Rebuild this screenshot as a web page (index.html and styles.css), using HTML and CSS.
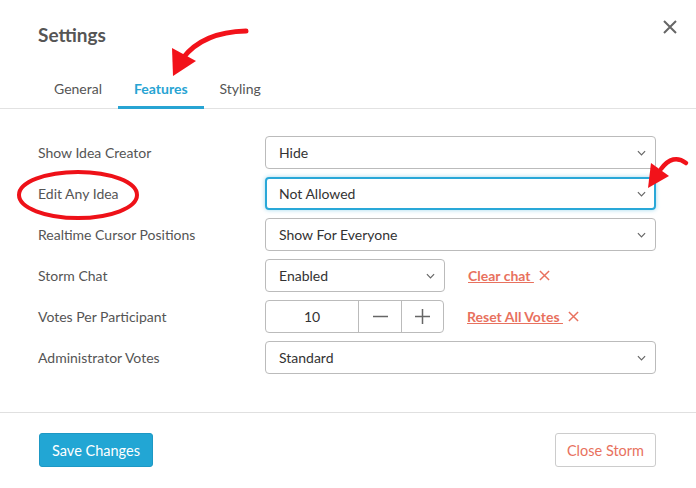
FILE: index.html
```html
<!DOCTYPE html>
<html>
<head>
<meta charset="utf-8">
<link rel="stylesheet" href="styles.css">
</head>
<body>
<div class="modal">
  <header class="modal-header">
    <div class="title-row">
      <h1 class="title">Settings</h1>
      <svg class="close" width="14" height="14" viewBox="0 0 14 14"><path d="M1 1L13 13M13 1L1 13" stroke="#666" stroke-width="2" fill="none"/></svg>
    </div>
    <nav class="tabs">
      <span class="tab">General</span>
      <span class="tab active">Features</span>
      <span class="tab">Styling</span>
    </nav>
  </header>

  <section class="modal-body">
    <div class="row">
      <label class="label">Show Idea Creator</label>
      <div class="select"><span>Hide</span><svg class="chev" viewBox="0 0 10 6"><path d="M1 1L5 5L9 1" stroke="#666" stroke-width="1.3" fill="none"/></svg></div>
    </div>
    <div class="row">
      <label class="label">Edit Any Idea</label>
      <div class="select focus"><span>Not Allowed</span><svg class="chev" viewBox="0 0 10 6"><path d="M1 1L5 5L9 1" stroke="#666" stroke-width="1.3" fill="none"/></svg></div>
    </div>
    <div class="row">
      <label class="label">Realtime Cursor Positions</label>
      <div class="select"><span>Show For Everyone</span><svg class="chev" viewBox="0 0 10 6"><path d="M1 1L5 5L9 1" stroke="#666" stroke-width="1.3" fill="none"/></svg></div>
    </div>
    <div class="row">
      <label class="label">Storm Chat</label>
      <div class="inline">
        <div class="select small"><span>Enabled</span><svg class="chev" viewBox="0 0 10 6"><path d="M1 1L5 5L9 1" stroke="#666" stroke-width="1.3" fill="none"/></svg></div>
        <a class="danger-link"><span class="u">Clear chat </span><svg class="x" viewBox="0 0 12 12"><path d="M1 1L11 11M11 1L1 11" stroke="#e8715e" stroke-width="1.6" fill="none"/></svg></a>
      </div>
    </div>
    <div class="row">
      <label class="label">Votes Per Participant</label>
      <div class="inline">
        <div class="stepper">
          <span class="num">10</span>
          <span class="step"><svg width="15" height="15" viewBox="0 0 15 15"><path d="M0 7.5H15" stroke="#666" stroke-width="1.5"/></svg></span>
          <span class="step"><svg width="15" height="15" viewBox="0 0 15 15"><path d="M0 7.5H15M7.5 0V15" stroke="#666" stroke-width="1.5"/></svg></span>
        </div>
        <a class="danger-link"><span class="u">Reset All Votes </span><svg class="x" viewBox="0 0 12 12"><path d="M1 1L11 11M11 1L1 11" stroke="#e8715e" stroke-width="1.6" fill="none"/></svg></a>
      </div>
    </div>
    <div class="row">
      <label class="label">Administrator Votes</label>
      <div class="select"><span>Standard</span><svg class="chev" viewBox="0 0 10 6"><path d="M1 1L5 5L9 1" stroke="#666" stroke-width="1.3" fill="none"/></svg></div>
    </div>
  </section>

  <footer class="modal-footer">
    <button class="btn primary">Save Changes</button>
    <button class="btn outline">Close Storm</button>
  </footer>

  <svg class="annotations" width="696" height="488" viewBox="0 0 696 488">
    <path d="M246 31 Q203 32 183 58" stroke="#f2121a" stroke-width="5" fill="none" stroke-linecap="round"/>
    <polygon points="172,48 196,61 173,76" fill="#f2121a"/>
    <ellipse cx="78" cy="195" rx="59" ry="23" stroke="#ee1118" stroke-width="4" fill="none"/>
    <path d="M686 163 Q673 153 661 169" stroke="#f2121a" stroke-width="4.5" fill="none" stroke-linecap="round"/>
    <polygon points="651,163 669,176 648,188" fill="#f2121a"/>
  </svg>
</div>
</body>
</html>
```
FILE: styles.css
```css
* { box-sizing: border-box; }
html, body { margin: 0; padding: 0; background: #fff; }
body { font-family: Lato, "Open Sans", sans-serif; color: #555; }

.modal { position: relative; width: 696px; height: 488px; background: #fff; }

.modal-header { border-bottom: 1px solid #e2e2e2; }
.title-row {
  display: flex; justify-content: space-between; align-items: flex-start;
  padding: 23px 19px 0 38px; height: 75px;
}
.title { margin: 0; font-size: 19px; line-height: 24px; font-weight: 700; color: #555; }
.close { margin-top: -3px; }

.tabs { display: flex; padding-left: 38px; margin-bottom: -1px; }
.tab {
  padding: 4px 16px 7px; line-height: 20px; font-size: 14px; color: #555;
  border-bottom: 3px solid transparent;
}
.tab.active { color: #27a4d3; font-weight: 700; border-bottom-color: #27a4d3; }

.modal-body {
  padding: 27px 40px 38px 38px;
  display: flex; flex-direction: column; gap: 8px;
  border-bottom: 1px solid #e0e0e0;
}
.row { display: grid; grid-template-columns: 227px 1fr; align-items: center; height: 33px; }
.label { font-size: 14px; color: #555; }

.select {
  height: 33px; border: 1px solid #bbb; border-radius: 4px;
  display: flex; align-items: center; justify-content: space-between;
  padding: 0 9px 0 13px; font-size: 14px; color: #333;
}
.select.focus { border: 2px solid #29a8d8; padding-left: 12px; padding-right: 8px; box-shadow: 0 0 4px rgba(41,168,216,0.45); }
.select.small { width: 180px; }
.chev { width: 9px; height: 6px; }

.inline { display: flex; align-items: center; gap: 23px; }
.danger-link { display: flex; align-items: center; gap: 1px; font-size: 14px; font-weight: 700; color: #e8715e; }
.danger-link .u { text-decoration: underline; white-space: pre; }
.x { width: 11px; height: 11px; margin-left: 4px; }

.stepper {
  display: flex; width: 179px; height: 33px; border: 1px solid #bbb; border-radius: 4px;
}
.num { width: 93px; display: flex; align-items: center; justify-content: center; font-size: 14px; color: #333; border-right: 1px solid #bbb; }
.step { width: 42px; display: flex; align-items: center; justify-content: center; }
.step + .step { border-left: 1px solid #bbb; flex: 1; }

.modal-footer { display: flex; justify-content: space-between; padding: 20px 40px 0 39px; }
.btn { height: 34px; border-radius: 3px; font-family: Lato, sans-serif; font-size: 14.5px; padding: 0; white-space: nowrap; }
.btn.primary { width: 114px; background: #22a6d4; border: 1px solid #1d98c4; color: #fff; }
.btn.outline { width: 101px; background: #fff; border: 1px solid #ccc; color: #e8715e; }

.annotations { position: absolute; left: 0; top: 0; pointer-events: none; }
```
